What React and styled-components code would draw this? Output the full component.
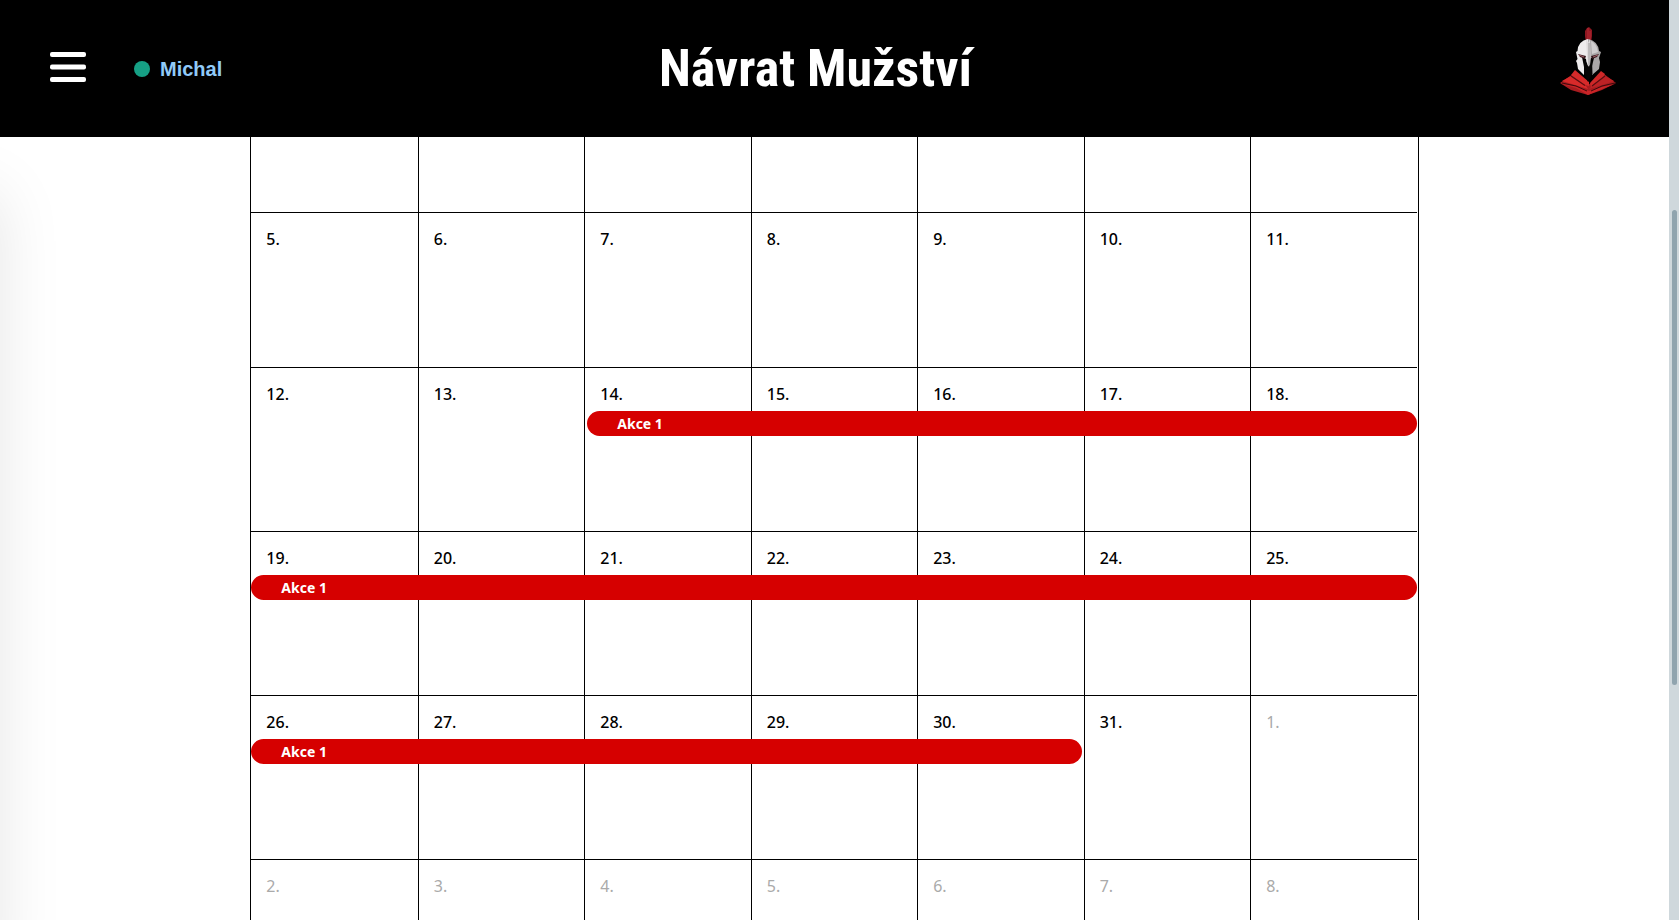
import React from "react";
import styled, { createGlobalStyle } from "styled-components";

const GlobalStyle = createGlobalStyle`
  *, *::before, *::after { box-sizing: border-box; }
  body { margin: 0; background: #fff; overflow: hidden; font-family: "Noto Sans", "Open Sans", sans-serif; }
`;

const Page = styled.div`
  display: grid;
  grid-template-columns: 1fr 10px;
  height: 100vh;
  overflow: hidden;
`;

const Content = styled.div`
  display: flex;
  flex-direction: column;
  min-width: 0;
  min-height: 0;
`;

const Header = styled.header`
  display: grid;
  grid-template-columns: 1fr auto 1fr;
  align-items: center;
  flex: none;
  height: 137px;
  padding: 0 40px 0 50px;
  background: #000;
`;

const HeaderStart = styled.div`
  display: flex;
  align-items: center;
  gap: 48px;
`;

const MenuButton = styled.button`
  display: flex;
  margin-bottom: 4px;
  padding: 0;
  border: 0;
  background: none;
  color: #fff;
  cursor: pointer;
`;

const UserLink = styled.a`
  display: flex;
  align-items: center;
  gap: 10px;
  color: #90caf9;
  font: 700 20px/24px "Liberation Sans", Arial, sans-serif;
  text-decoration: none;
`;

const StatusDot = styled.span`
  width: 16px;
  height: 16px;
  border-radius: 50%;
  background: #16a085;
`;

const Title = styled.h1`
  margin: 0 48px 0 0;
  color: #fff;
  font: 700 52px/72px "Roboto Condensed", "Liberation Sans Narrow", sans-serif;
  white-space: nowrap;
`;

const LogoLink = styled.a`
  display: flex;
  justify-self: end;
  margin-bottom: 16px;
`;

const Main = styled.main`
  position: relative;
  display: flex;
  justify-content: center;
  flex: 1;
  min-height: 0;
  overflow: hidden;
`;

const DrawerShadow = styled.div`
  position: absolute;
  top: 0;
  bottom: 0;
  left: -200px;
  width: 200px;
  box-shadow: 0 56px 60px rgba(0, 0, 0, 0.1);
`;

const Calendar = styled.section`
  align-self: flex-start;
  width: 70%;
  padding-right: 1px;
  border: solid #000;
  border-width: 0 1px;
`;

const Week = styled.div`
  display: grid;
  grid-template-columns: repeat(7, 1fr);
  grid-template-rows: 43px 25px 1fr;
  height: ${({ $size }) => ({ cut: 76, plain: 155, busy: 164 })[$size]}px;
  border-bottom: 1px solid #000;
`;

const Day = styled.div`
  grid-row: 1 / -1;
  grid-column: ${({ $column }) => $column};
  padding: 14px 15px;
  border-left: ${({ $column }) => ($column > 1 ? "1px solid #000" : "0")};
  color: ${({ $outside }) => ($outside ? "#aaa" : "#000")};
  font-size: 16px;
  font-weight: ${({ $outside }) => ($outside ? 400 : 500)};
  line-height: 24px;
`;

const EventBar = styled.a`
  z-index: 1;
  grid-row: 2;
  grid-column: ${({ $from, $to }) => `${$from} / ${$to + 1}`};
  margin-left: ${({ $starts }) => ($starts ? 3 : 0)}px;
  margin-right: ${({ $ends }) => ($ends ? 2 : 0)}px;
  padding-left: 30px;
  border-radius: 13px;
  background: #d60000;
  color: #fff;
  font-size: 14px;
  font-weight: 700;
  line-height: 25px;
  text-decoration: none;
`;

const ScrollTrack = styled.div`
  padding: 210px 2px 0 3px;
  background: #cfd8dc;
`;

const ScrollThumb = styled.div`
  height: 475px;
  border-radius: 3px;
  background: #90a4ae;
`;

const weeks = [
  { size: "cut", days: ["", "", "", "", "", "", ""] },
  { size: "plain", days: [5, 6, 7, 8, 9, 10, 11] },
  { size: "busy", days: [12, 13, 14, 15, 16, 17, 18], event: { from: 3, to: 7, starts: true } },
  { size: "busy", days: [19, 20, 21, 22, 23, 24, 25], event: { from: 1, to: 7 } },
  { size: "busy", days: [26, 27, 28, 29, 30, 31, 1], outsideFrom: 6, event: { from: 1, to: 5, ends: true } },
  { size: "plain", days: [2, 3, 4, 5, 6, 7, 8], outsideFrom: 0 },
];

function MenuIcon() {
  return (
    <svg width="36" height="30" viewBox="0 0 36 30" fill="currentColor" aria-hidden="true">
      <rect width="36" height="5" rx="2" />
      <rect y="12.5" width="36" height="5" rx="2" />
      <rect y="25" width="36" height="5" rx="2" />
    </svg>
  );
}

function SpartanLogo() {
  return (
    <svg width="80" height="80" viewBox="0 0 80 80" aria-hidden="true">
      <path d="M36 10 38 7 40 6 43 9 43 15 42 22 40 25 37 22 36 15Z" fill="#8e1720" />
      <path d="M39 7V22M41 10V20" stroke="#b52b34" strokeWidth="1" />
      <path d="M11 62 24 53 39 64 55 53 67 62 53 69 39 74 22 69Z" fill="#a81c20" />
      <path d="M22 54 26 49 40 61 40 65 36 64Z" fill="#d62a2a" />
      <path d="M41 62 52 50 56 53 54 56 42 66Z" fill="#cf2828" />
      <path d="M13 60 22 55 37 65 39 68 26 64Z" fill="#d82a2a" />
      <path d="M65 60 56 55 43 65 40 68 53 64Z" fill="#bd2225" />
      <path d="M12 63 27 67 39 74 53 68 66 63 53 66 40 70 26 65Z" fill="#c92427" />
      <path d="M13 62 27 65 38 70M66 62 53 65 42 70" fill="none" stroke="#3d090b" strokeWidth="1" />
      <path d="M22 55 36 64.500M56 55 43 65" stroke="#5a0d10" strokeWidth="1.200" />
      <path d="M31 46 36 54 39 61 42 55 47 49 46 40H33Z" fill="#050505" />
      <path d="M28.500 30Q29 20 39 18V42L38 45 37 38 33 36 35 46 35 54 29 48 28 42 27 40 28.500 38 27 31Z" fill="#eeeced" />
      <path d="M39 18Q49 20 50 30L52 31 50 37 51 41 50 48 43 54 43 45 45 37 42 37 41 44 39 45Z" fill="#aaa7a8" />
      <path d="M37 18 39 22 41 18 41.500 36 40 46 38.500 43Z" fill="#dedbdc" />
      <path d="M42 20Q48 23 49 31L43 33Z" fill="#cfcdce" />
      <path d="M29 33 37 35 36 38 31 36ZM50 33 42 35 43 38 48 36Z" fill="#35181c" />
      <path d="M30 34 35 36M49 34 44 36" stroke="#a2636b" strokeWidth="1" />
      <path d="M35 39 38 42 38 55 35 52ZM43 39 41 46 41 55 43.500 53Z" fill="#050505" />
      <path d="M40 22V44" stroke="#888" strokeWidth="0.800" />
    </svg>
  );
}

export default function App() {
  return (
    <>
      <GlobalStyle />
      <Page>
        <Content>
          <Header>
            <HeaderStart>
              <MenuButton type="button" aria-label="Menu">
                <MenuIcon />
              </MenuButton>
              <UserLink href="#profil">
                <StatusDot />
                Michal
              </UserLink>
            </HeaderStart>
            <Title>Návrat Mužství</Title>
            <LogoLink href="#domu" aria-label="Návrat Mužství">
              <SpartanLogo />
            </LogoLink>
          </Header>
          <Main>
            <DrawerShadow />
            <Calendar>
              {weeks.map(({ size, days, outsideFrom = 7, event }, w) => (
                <Week key={w} $size={size}>
                  {days.map((day, i) => (
                    <Day key={i} $column={i + 1} $outside={i >= outsideFrom}>
                      {day && `${day}.`}
                    </Day>
                  ))}
                  {event && (
                    <EventBar
                      href="#akce-1"
                      $from={event.from}
                      $to={event.to}
                      $starts={event.starts}
                      $ends={event.ends}
                    >
                      Akce 1
                    </EventBar>
                  )}
                </Week>
              ))}
            </Calendar>
          </Main>
        </Content>
        <ScrollTrack>
          <ScrollThumb />
        </ScrollTrack>
      </Page>
    </>
  );
}
